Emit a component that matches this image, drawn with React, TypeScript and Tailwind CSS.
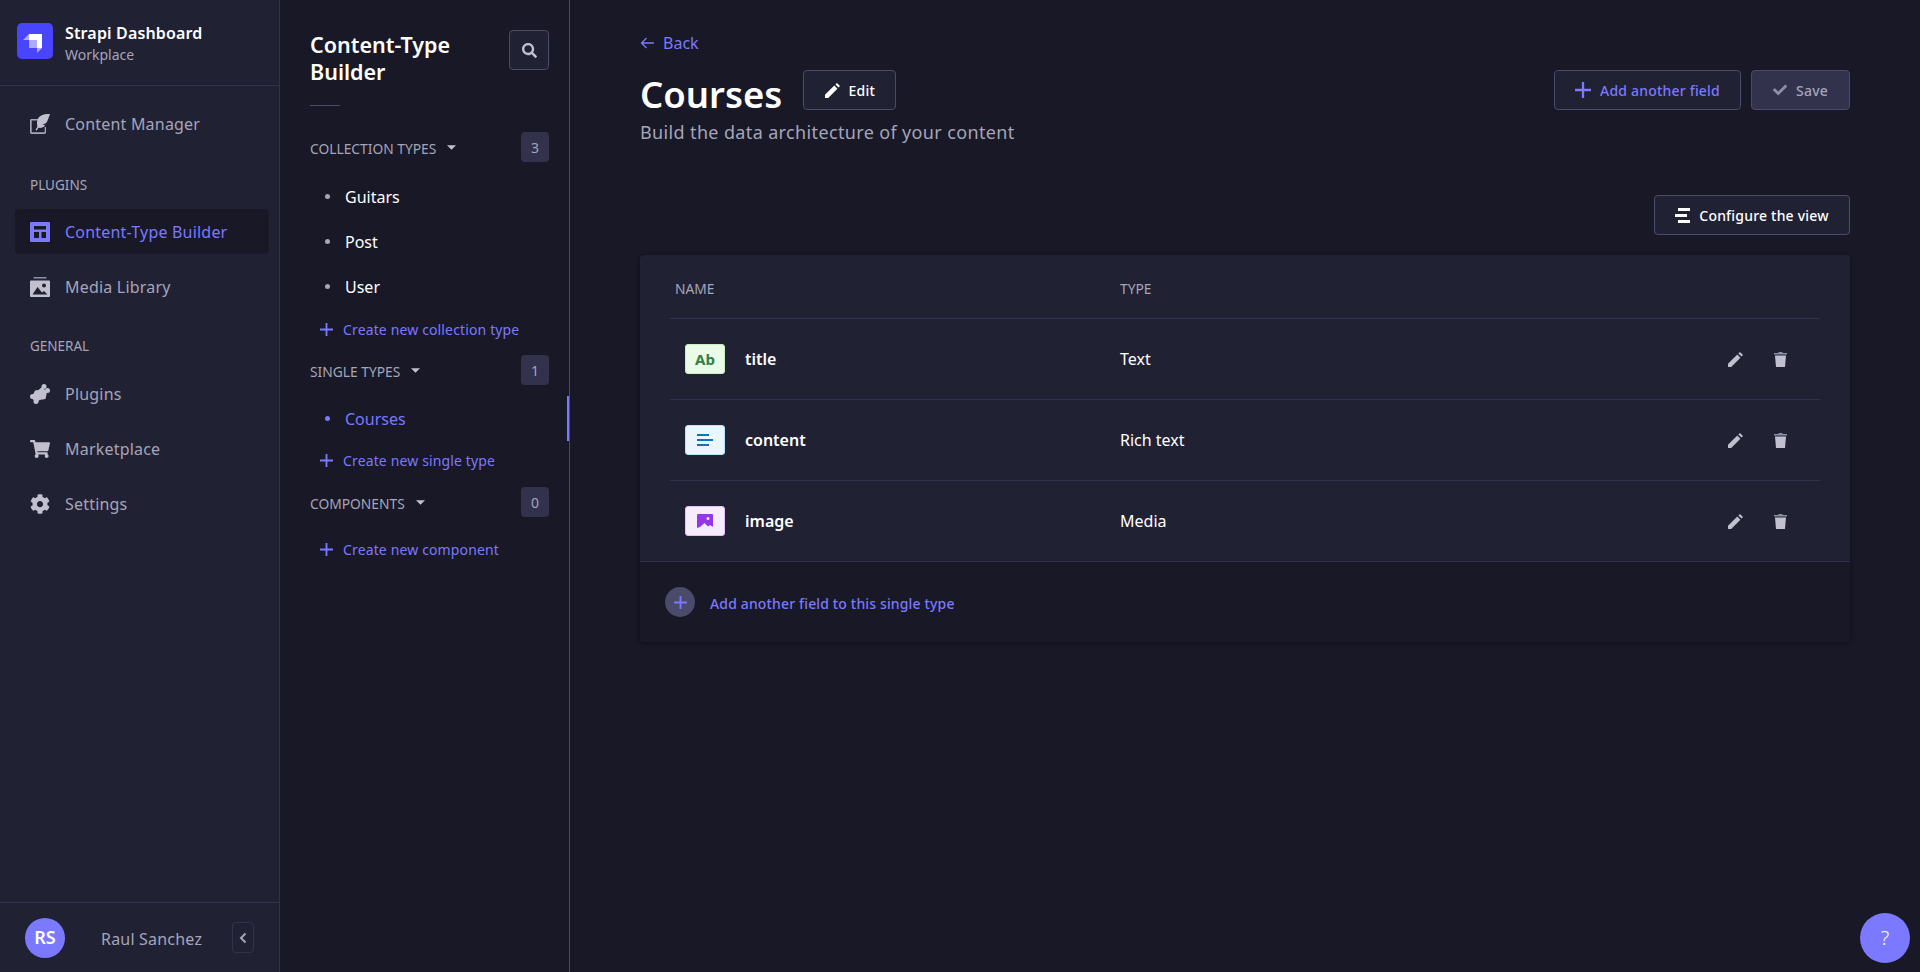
import { FaCheck, FaCog, FaSearch, FaShoppingCart } from "react-icons/fa";
import type { ReactNode } from "react";

function StrapiLogo() {
  return (
    <div className="h-9 w-9 shrink-0 rounded-[5px] bg-[#4945ff]">
      <svg viewBox="0 0 36 36" className="h-9 w-9">
        <path d="M12 11h13v14h-5v-8h-8z" fill="#fff" />
        <path d="M12 17h8v8h-8z" fill="#fff" opacity="0.55" />
        <path d="M12 11v6H6z" fill="#fff" opacity="0.55" />
        <path d="M20 25h5l-5 5z" fill="#fff" opacity="0.55" />
      </svg>
    </div>
  );
}

function FeatherIcon() {
  return (
    <svg viewBox="0 0 20 20" className="h-5 w-5">
      <path d="M0 6.500C0 5.500.6 5 1.600 5H8v1.600H1.700v11.700h13V13H16v5.300c0 1-.6 1.700-1.600 1.700H1.600C.6 20 0 19.300 0 18.300z" fill="#a5a5ba" />
      <path d="M20 0c-5.500-.2-10 1-12 4.600-1.300 2.500-1.200 5.400-.6 7.900L5.500 16l1.300.5 1.500-2.700c2.700.4 5.500-.3 6.900-2.600l-2.700-.6 3.500-1.400C17.500 7 18.700 4 20 0z" fill="#c0c0cf" />
    </svg>
  );
}

function LayoutIcon() {
  return (
    <svg viewBox="0 0 20 20" className="h-5 w-5">
      <path fillRule="evenodd" d="M0 1a1 1 0 0 1 1-1h18a1 1 0 0 1 1 1v18a1 1 0 0 1-1 1H1a1 1 0 0 1-1-1zM4 4v3.500h12V4zm0 6v6h5v-6zm7.500 0v6H16v-6z" fill="#7b79ff" />
    </svg>
  );
}

function MediaIcon() {
  return (
    <svg viewBox="0 0 20 20" className="h-5 w-5">
      <rect x="3.500" y="0" width="13" height="1.500" rx="0.500" fill="#8e8ea9" />
      <path fillRule="evenodd" d="M1 3.500h18a1 1 0 0 1 1 1V19a1 1 0 0 1-1 1H1a1 1 0 0 1-1-1V4.500a1 1 0 0 1 1-1zM14 6.500a2 2 0 1 0 0 4 2 2 0 0 0 0-4zM2.500 17.500h15L14 14l-2 1.500L7.500 10z" fill="#c0c0cf" />
    </svg>
  );
}

function PuzzleIcon() {
  return (
    <svg viewBox="0 0 20 20" className="h-5 w-5" fill="#c0c0cf">
      <circle cx="14" cy="2.500" r="2.500" />
      <circle cx="17.500" cy="6.500" r="2.500" />
      <circle cx="2.500" cy="12.500" r="2.500" />
      <circle cx="6" cy="17.500" r="2.500" />
      <path d="M5 6.500 8.500 6l3.500-3 5 5-1.500 7-6 1-3 3-5-5z" />
    </svg>
  );
}

function PlusIcon({ className }: { className: string }) {
  return (
    <svg viewBox="0 0 14 14" className={className}>
      <path d="M6 0h2v6h6v2H8v6H6V8H0V6h6z" fill="currentColor" />
    </svg>
  );
}

function PencilIcon({ className }: { className: string }) {
  return (
    <svg viewBox="0 0 15 15" className={className}>
      <path d="M0 15v-3.200L9.300 2.600l3.100 3.100L3.200 15z" fill="currentColor" />
      <path d="M10.400 1.500 11.900 0 15 3.100l-1.500 1.500z" fill="currentColor" />
    </svg>
  );
}

function TrashIcon() {
  return (
    <svg viewBox="0 0 13 15" className="h-[15px] w-[13px]">
      <path d="M4.500 0h4v1H13v1.500H0V1h4.500z" fill="#8e8ea9" />
      <path d="M1 3.500h11L11 15H2z" fill="#c0c0cf" />
    </svg>
  );
}

function NavItem({ icon, label, active }: { icon: ReactNode; label: string; active?: boolean }) {
  return (
    <div className={`mr-[10px] ml-[15px] flex h-[45px] items-center gap-[15px] rounded-[4px] px-[15px] text-[16px] tracking-[0.2px] ${active ? "bg-[#181826] text-[#7b79ff]" : "text-[#a5a5ba]"}`}>
      <span className="flex h-5 w-5 shrink-0 items-center justify-center">{icon}</span>
      <span>{label}</span>
    </div>
  );
}

function SideNav() {
  return (
    <aside className="flex h-full w-[280px] shrink-0 flex-col border-r border-[#32324d] bg-[#212134]">
      <div className="flex h-[86px] items-start gap-[12px] border-b border-[#32324d] pt-[23px] pl-[17px]">
        <StrapiLogo />
        <div className="-mt-px">
          <div className="text-[16px] leading-[23px] font-semibold tracking-[0.15px] text-white">Strapi Dashboard</div>
          <div className="text-[14px] leading-[19px] text-[#a5a5ba]">Workplace</div>
        </div>
      </div>
      <nav className="flex flex-1 flex-col pt-[15px]">
        <NavItem icon={<FeatherIcon />} label="Content Manager" />
        <div className="mt-[31px] mb-[16px] pl-[30px] text-[13.500px] leading-4 text-[#a5a5ba]">PLUGINS</div>
        <div className="flex flex-col gap-[10px]">
          <NavItem icon={<LayoutIcon />} label="Content-Type Builder" active />
          <NavItem icon={<MediaIcon />} label="Media Library" />
        </div>
        <div className="mt-[29px] mb-[17px] pl-[30px] text-[13.500px] leading-4 text-[#a5a5ba]">GENERAL</div>
        <div className="flex flex-col gap-[10px]">
          <NavItem icon={<PuzzleIcon />} label="Plugins" />
          <NavItem icon={<FaShoppingCart className="h-5 w-5 text-[#c0c0cf]" />} label="Marketplace" />
          <NavItem icon={<FaCog className="h-5 w-5 text-[#c0c0cf]" />} label="Settings" />
        </div>
      </nav>
      <div className="flex h-[70px] items-center border-t border-[#32324d] pl-[25px]">
        <div className="flex h-10 w-10 items-center justify-center rounded-full bg-[#7b79ff] text-[18px] font-semibold text-white">RS</div>
        <div className="ml-[36px] flex-1 pt-[2px] text-[16px] tracking-[0.2px] text-[#a5a5ba]">Raul Sanchez</div>
        <div className="mr-[25px] flex h-[31px] w-[22px] items-center justify-center rounded-[4px] border border-[#32324d]">
          <svg viewBox="0 0 8 12" className="h-3 w-2"><path d="M6.500 1.500 2 6l4.500 4.500" fill="none" stroke="#a5a5ba" strokeWidth="2" /></svg>
        </div>
      </div>
    </aside>
  );
}

function SectionHeader({ label, count }: { label: string; count: number }) {
  return (
    <div className="flex h-[30px] items-center justify-between">
      <div className="flex items-center gap-[11px] text-[13.800px] text-[#a5a5ba]">
        <span className="pt-[4px]">{label}</span>
        <svg viewBox="0 0 10 5" className="h-[5px] w-[9px]"><path d="M0 0h10L5 5z" fill="#c0c0cf" /></svg>
      </div>
      <div className="flex h-[30px] min-w-[28px] items-center justify-center rounded-[4px] bg-[#32324d] text-[14px] text-[#a5a5ba]">{count}</div>
    </div>
  );
}

function SubLink({ label, active }: { label: string; active?: boolean }) {
  return (
    <div className={`relative -mr-[20px] flex h-[45px] items-center pl-[15px] text-[16px] ${active ? "text-[#7b79ff]" : "text-white"}`}>
      <span className={`h-[5px] w-[5px] rounded-full ${active ? "bg-[#7b79ff]" : "bg-[#a5a5ba]"}`} />
      <span className="ml-[15px]">{label}</span>
      {active && <span className="absolute top-0 right-0 h-[45px] w-[2px] bg-[#7b79ff]" />}
    </div>
  );
}

function CreateLink({ label }: { label: string }) {
  return (
    <div className="flex h-[21px] items-center pl-[10px] text-[14px] tracking-[0.14px] text-[#7b79ff]">
      <PlusIcon className="h-[13px] w-[13px]" />
      <span className="ml-[10px]">{label}</span>
    </div>
  );
}

function SubNav() {
  return (
    <aside className="flex h-full w-[290px] shrink-0 flex-col border-r border-[#4a4a6a] bg-[#181826] pt-[30px] pr-[20px] pl-[30px]">
      <div className="flex items-start justify-between">
        <h2 className="mt-px text-[21.500px] leading-[27px] font-semibold text-white">Content-Type<br />Builder</h2>
        <div className="flex h-10 w-10 items-center justify-center rounded-[4px] border border-[#4a4a6a] bg-[#212134]">
          <FaSearch className="h-[15px] w-[15px] text-[#c0c0cf]" />
        </div>
      </div>
      <div className="mt-[20px] h-px w-[30px] bg-[#4a4a6a]" />
      <div className="mt-[26px]">
        <SectionHeader label="COLLECTION TYPES" count={3} />
      </div>
      <div className="mt-[12px]">
        <SubLink label="Guitars" />
        <SubLink label="Post" />
        <SubLink label="User" />
      </div>
      <div className="mt-[10px]"><CreateLink label="Create new collection type" /></div>
      <div className="mt-[15px]"><SectionHeader label="SINGLE TYPES" count={1} /></div>
      <div className="mt-[11px]"><SubLink label="Courses" active /></div>
      <div className="mt-[9px]"><CreateLink label="Create new single type" /></div>
      <div className="mt-[16px]"><SectionHeader label="COMPONENTS" count={0} /></div>
      <div className="mt-[22px]"><CreateLink label="Create new component" /></div>
    </aside>
  );
}

function ActionButton({ icon, label, className }: { icon: ReactNode; label: string; className: string }) {
  return (
    <div className={`flex h-10 items-center justify-center gap-[9px] rounded-[4px] border border-[#4a4a6a] text-[14px] font-medium tracking-[0.2px] ${className}`}>
      {icon}
      <span>{label}</span>
    </div>
  );
}

const fields = [
  {
    name: "title",
    type: "Text",
    box: "border-[#c6f0c2] bg-[#eafbe7]",
    icon: <span className="text-[15px] font-bold text-[#328048]">Ab</span>,
  },
  {
    name: "content",
    type: "Rich text",
    box: "border-[#b8e1ff] bg-[#eaf5ff]",
    icon: (
      <svg viewBox="0 0 16 12" className="h-3 w-4"><path d="M0 0h12v2H0zM0 5h16v2H0zM0 10h12v2H0z" fill="#0c75af" /></svg>
    ),
  },
  {
    name: "image",
    type: "Media",
    box: "border-[#e6bdff] bg-[#f6ecfc]",
    icon: (
      <svg viewBox="0 0 16 14" className="h-[14px] w-4">
        <path fillRule="evenodd" d="M1 0h14a1 1 0 0 1 1 1v12l-3-2-2 1.500L7.500 9 3 13l-3 1V1a1 1 0 0 1 1-1zm10 3a1.500 1.500 0 1 0 0 3 1.500 1.500 0 0 0 0-3z" fill="#9736e8" />
      </svg>
    ),
  },
];

function FieldRow({ field }: { field: (typeof fields)[number] }) {
  return (
    <div className="mx-[30px] flex h-[81px] items-center border-t border-[#32324d]">
      <div className={`ml-[15px] flex h-[30px] w-[40px] items-center justify-center rounded-[3px] border ${field.box}`}>{field.icon}</div>
      <div className="ml-[20px] w-[375px] text-[16px] font-semibold text-white">{field.name}</div>
      <div className="flex-1 text-[16px] text-white">{field.type}</div>
      <div className="mr-[33px] flex items-center gap-[31px] text-[#c0c0cf]">
        <PencilIcon className="h-[15px] w-[15px]" />
        <TrashIcon />
      </div>
    </div>
  );
}

function Main() {
  return (
    <main className="relative h-full flex-1 bg-[#181826] px-[70px] pt-[30px]">
      <div className="flex h-[26px] items-center gap-[9px] text-[16px] text-[#7b79ff]">
        <svg viewBox="0 0 14 12" className="h-3 w-[14px]"><path d="M14 6H2M6.500 1 1.500 6l5 5" fill="none" stroke="#7b79ff" strokeWidth="1.300" /></svg>
        <span>Back</span>
      </div>
      <div className="mt-[14px] flex items-start justify-between">
        <div>
          <div className="flex items-start gap-[21px]">
            <h1 className="text-[36.500px] leading-[48px] font-semibold text-white">Courses</h1>
            <ActionButton icon={<PencilIcon className="h-[15px] w-[15px]" />} label="Edit" className="w-[93px] bg-[#212134] text-white" />
          </div>
          <p className="mt-[2px] text-[18px] leading-[24px] tracking-[0.36px] text-[#a5a5ba]">Build the data architecture of your content</p>
        </div>
        <div className="flex gap-[10px]">
          <ActionButton icon={<PlusIcon className="h-4 w-4" />} label="Add another field" className="w-[187px] bg-[#212134] text-[#7b79ff]" />
          <ActionButton icon={<FaCheck className="h-[14px] w-[14px] text-[#8e8ea9]" />} label="Save" className="w-[99px] bg-[#32324d] text-[#a5a5ba]" />
        </div>
      </div>
      <div className="mt-[51px] flex justify-end">
        <ActionButton
          icon={<svg viewBox="0 0 15 15" className="h-[15px] w-[15px]"><path d="M3 0h12v3H3zM0 6h12v3H0zM3 12h12v3H3z" fill="#fff" /></svg>}
          label="Configure the view"
          className="w-[196px] bg-[#212134] text-white"
        />
      </div>
      <section className="mt-[20px] overflow-hidden rounded-[4px] bg-[#212134] shadow-[0_1px_4px_rgba(3,3,5,0.35)]">
        <div className="flex h-[63px] items-center px-[35px] pt-[5px] text-[13.800px] text-[#a5a5ba]">
          <span className="w-[445px]">NAME</span>
          <span>TYPE</span>
        </div>
        {fields.map((field) => (
          <FieldRow key={field.name} field={field} />
        ))}
        <div className="flex h-[81px] items-center border-t border-[#32324d] bg-[#181826] pl-[25px]">
          <div className="flex h-[30px] w-[30px] items-center justify-center rounded-full bg-[#4a4a6a]">
            <PlusIcon className="h-[13px] w-[13px] text-[#7b79ff]" />
          </div>
          <span className="ml-[15px] pt-[2px] text-[14px] font-medium tracking-[0.15px] text-[#7b79ff]">Add another field to this single type</span>
        </div>
      </section>
      <div className="absolute right-[10px] bottom-[9px] flex h-[50px] w-[50px] items-center justify-center rounded-full bg-[#7b79ff] text-[20px] font-light text-white">?</div>
    </main>
  );
}

export default function App() {
  return (
    <div className="flex h-[972px] w-full overflow-hidden bg-[#181826] font-['Noto_Sans',sans-serif]">
      <SideNav />
      <SubNav />
      <Main />
    </div>
  );
}
